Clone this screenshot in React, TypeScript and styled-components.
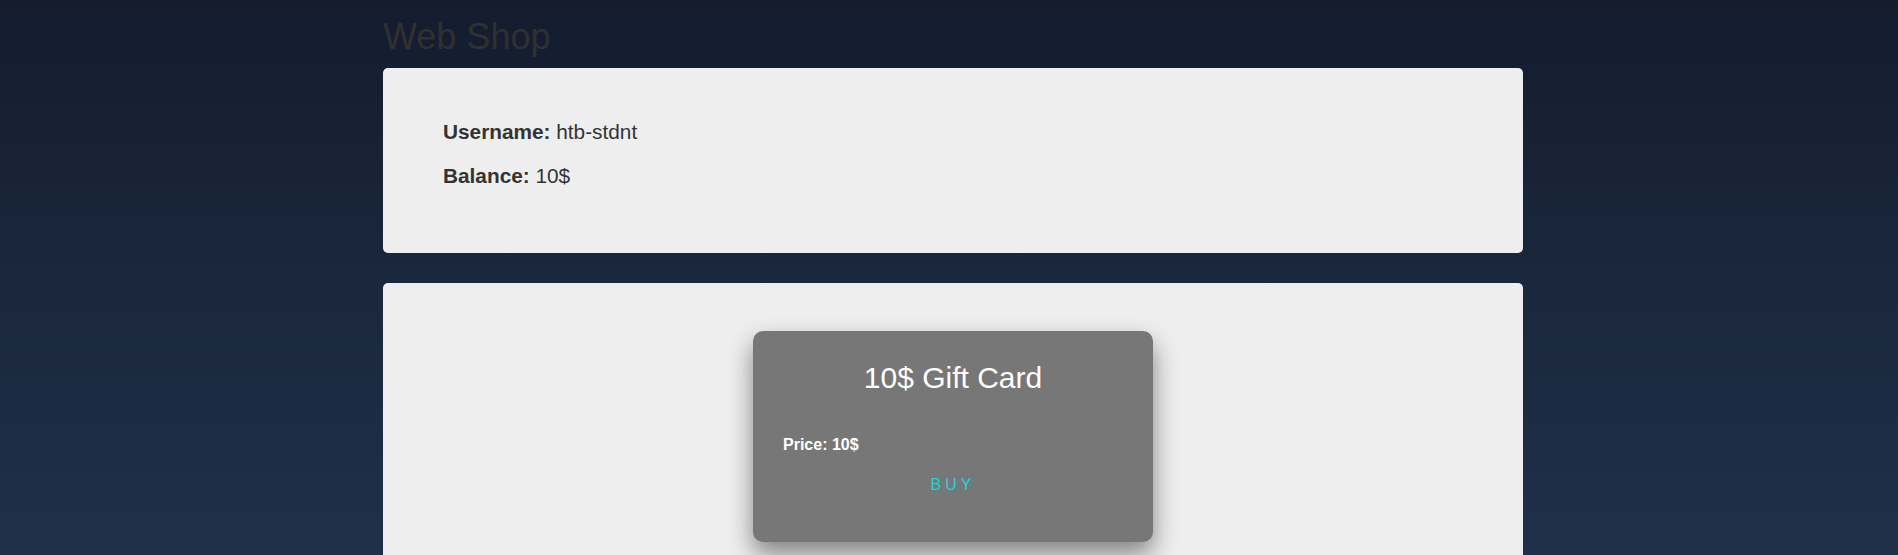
import React from "react";
import styled, { createGlobalStyle } from "styled-components";

const GlobalStyle = createGlobalStyle`
  html, body {
    margin: 0;
    padding: 0;
  }
  html {
    background: linear-gradient(180deg, #141c2e 0%, #1a273c 50%, #203049 100%);
    background-attachment: fixed;
    min-height: 100%;
  }
  body {
    font-family: "Liberation Sans", Arial, sans-serif;
    color: #333;
  }
  * { box-sizing: border-box; }
`;

const Page = styled.div`
  padding: 0 0 0 8px;
`;

const Container = styled.div`
  width: 1140px;
  margin: 0 auto;
  display: flex;
  flex-direction: column;
  padding-top: 16px;
`;

const Title = styled.h1`
  margin: 0 0 10px 0;
  font-size: 36px;
  line-height: 42px;
  font-weight: 400;
  color: #303030;
`;

const Panel = styled.section<{ $center?: boolean }>`
  background: #eeeeee;
  border-radius: 5px;
  display: flex;
  flex-direction: column;
  align-items: ${(p) => (p.$center ? "center" : "flex-start")};
  padding: ${(p) => (p.$center ? "48px 60px" : "50px 60px 47px")};
  margin-bottom: 30px;
`;

const InfoLine = styled.p`
  margin: 0 0 16px;
  font-size: 20.8px;
  line-height: 28px;
  color: #333;
`;

const Label = styled.strong`
  font-weight: 700;
`;

const GiftCard = styled.div`
  width: 400px;
  background: #777777;
  border-radius: 10px;
  box-shadow: 0 12px 24px rgba(0, 0, 0, 0.45);
  padding: 20px 30px 20px;
  display: flex;
  flex-direction: column;
  color: #ffffff;
`;

const CardTitle = styled.h2`
  margin: 9px 0 0;
  font-size: 30px;
  line-height: 35px;
  font-weight: 400;
  text-align: center;
`;

const Price = styled.p`
  margin: 40px 0 0;
  font-size: 16px;
  line-height: 20px;
  font-weight: 700;
`;

const BuyButton = styled.button`
  align-self: center;
  margin: 14px 0 21px 0;
  padding: 6px 12px;
  background: transparent;
  border: none;
  font-family: "Liberation Sans", Arial, sans-serif;
  font-size: 16px;
  line-height: 20px;
  letter-spacing: 4px;
  color: #12d8dc;
  cursor: pointer;
`;

export default function App() {
  return (
    <>
      <GlobalStyle />
      <Page>
        <Container>
          <Title>Web Shop</Title>
          <Panel>
            <InfoLine>
              <Label>Username:</Label> htb-stdnt
            </InfoLine>
            <InfoLine>
              <Label>Balance:</Label> 10$
            </InfoLine>
          </Panel>
          <Panel $center>
            <GiftCard>
              <CardTitle>10$ Gift Card</CardTitle>
              <Price>Price: 10$</Price>
              <BuyButton>BUY</BuyButton>
            </GiftCard>
          </Panel>
        </Container>
      </Page>
    </>
  );
}
